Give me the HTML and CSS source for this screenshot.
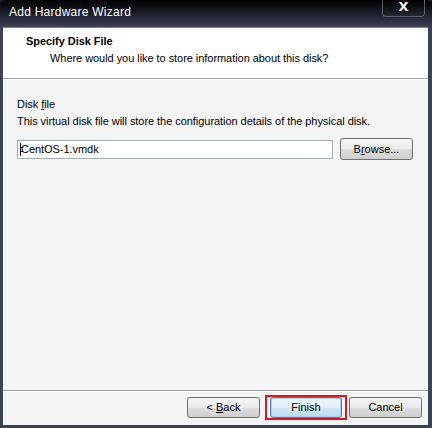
FILE: index.html
```html
<!DOCTYPE html>
<html lang="en">
  <head>
    <meta charset="UTF-8" />
    <meta name="viewport" content="width=device-width, initial-scale=1.0" />
    <title>Add Hardware Wizard</title>
    <link rel="stylesheet" href="styles.css">
  </head>
  <body>
    <div class="window">
      <div class="titlebar">
        <span class="title">Add Hardware Wizard</span>
        <div class="close">X</div>
      </div>
      <div class="client">
        <div class="header">
          <div class="head-title">Specify Disk File</div>
          <div class="head-sub">Where would you like to store information about this disk?</div>
        </div>
        <div class="body">
          <div class="label">Disk <u>f</u>ile</div>
          <div class="desc">This virtual disk file will store the configuration details of the physical disk.</div>
          <div class="file-row">
            <div class="input"><span class="caret"></span>CentOS-1.vmdk</div>
            <button class="btn browse">B<u>r</u>owse...</button>
          </div>
        </div>
        <div class="footer">
          <button class="btn">&lt; <u>B</u>ack</button>
          <div class="highlight"><button class="btn default">Finish</button></div>
          <button class="btn">Cancel</button>
        </div>
      </div>
    </div>
  </body>
</html>
```

FILE: styles.css
```css
* {
  margin: 0;
  padding: 0;
  box-sizing: border-box;
}
html,
body {
  width: 432px;
  height: 428px;
  overflow: hidden;
}
body {
  font-family: "Liberation Sans", Arial, sans-serif;
  font-size: 11px;
  letter-spacing: -0.05px;
  color: #000;
  background: #1c1f2a;
}
.window {
  width: 432px;
  height: 428px;
  display: flex;
  flex-direction: column;
  background: linear-gradient(to bottom, #000 0px, #0c0d12 6px, #2a2e3e 20px, #3c4154 27px);
  padding: 0 4px 3px 3px;
  border-radius: 6px 6px 0 0;
}
.titlebar {
  height: 27px;
  display: flex;
  align-items: flex-start;
  justify-content: space-between;
}
.title {
  color: #fff;
  font-size: 12px;
  padding: 5px 0 0 6px;
  letter-spacing: 0.25px;
}
.close {
  width: 43px;
  height: 17px;
  margin-right: 3px;
  border: 1px solid #5a5e6c;
  border-top: none;
  border-radius: 0 0 4px 4px;
  background: linear-gradient(to bottom, #000 0px, #15161c 10px, #2a2c36 17px);
  color: #fff;
  font-family: "DejaVu Sans", sans-serif;
  font-weight: bold;
  font-size: 13px;
  text-align: center;
  line-height: 14px;
}
.client {
  flex: 1;
  display: flex;
  flex-direction: column;
  background: #f4f4f4;
  border-top: 1px solid #7d8190;
}
.header {
  height: 51px;
  background: #fff;
  border-bottom: 1px solid #a0a0a0;
  box-shadow: 0 1px 0 #fff;
  padding: 6px 0 0 23px;
}
.head-title {
  font-weight: bold;
  line-height: 14px;
}
.head-sub {
  padding: 3px 0 0 24px;
  line-height: 14px;
}
.body {
  flex: 1;
  padding: 19px 0 0 14px;
}
.label {
  line-height: 13px;
}
.desc {
  padding-top: 4px;
  line-height: 13px;
}
.file-row {
  display: flex;
  align-items: center;
  margin-top: 10px;
  gap: 7px;
}
.input {
  width: 316px;
  height: 19px;
  background: #fff;
  border: 1px solid #a5acb2;
  padding: 2px 0 0 2px;
  line-height: 13px;
  display: flex;
}
.caret {
  position: relative;
  width: 1px;
  height: 13px;
  background: #000;
}
.caret::before,
.caret::after {
  content: "";
  position: absolute;
  left: 0;
  width: 3px;
  height: 1px;
  background: #000;
}
.caret::before {
  top: 4px;
}
.caret::after {
  top: 8px;
}
.btn {
  font-family: inherit;
  font-size: 11px;
  color: #000;
  width: 73px;
  height: 21px;
  border: 1px solid #707070;
  border-radius: 3px;
  background: linear-gradient(to bottom, #f6f6f6 0%, #eaeaea 50%, #dcdcdc 51%, #cfcfcf 100%);
}
.browse {
  width: 73px;
  height: 22px;
}
.footer {
  height: 35px;
  border-top: 1px solid #a0a0a0;
  box-shadow: inset 0 1px 0 #fff;
  display: flex;
  align-items: center;
  justify-content: flex-end;
  padding: 0 6px 2px 0;
  gap: 2px;
}
.footer > .btn:first-child {
  margin-right: 3px;
}
.highlight {
  border: 2px solid #e8141c;
  padding: 0 3px;
  display: flex;
}
.default {
  width: 72px;
  border-color: #3c7fb1;
  box-shadow: inset 0 0 0 1px #9fd5f7;
  background: linear-gradient(to bottom, #f2f8fc 0%, #e2eff8 50%, #cfe6f5 51%, #bcdcf0 100%);
}
```
